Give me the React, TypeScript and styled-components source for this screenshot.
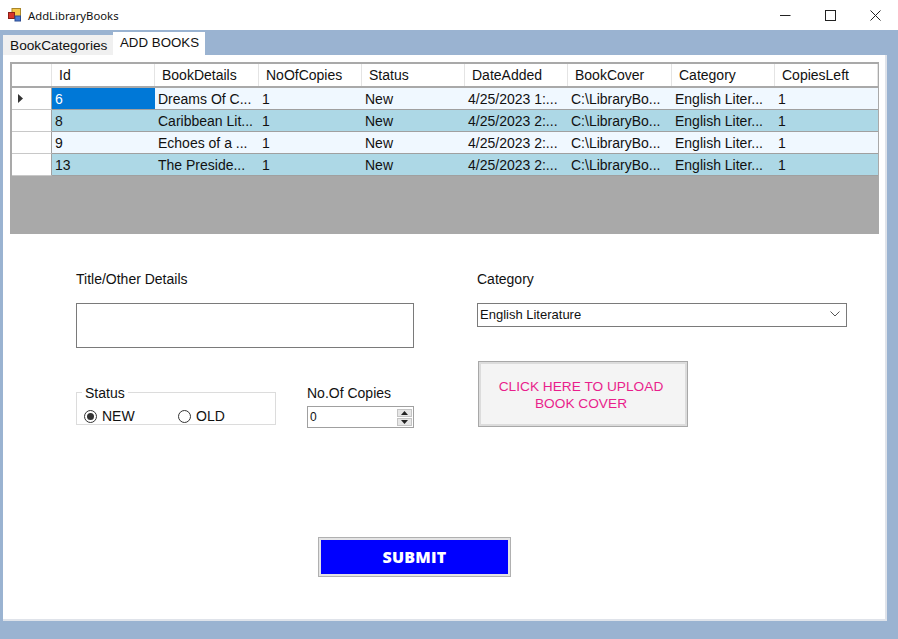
import React from "react";
import styled, { createGlobalStyle } from "styled-components";

const columns = ["Id", "BookDetails", "NoOfCopies", "Status", "DateAdded", "BookCover", "Category", "CopiesLeft"];

const rows = [
  { id: "6", details: "Dreams Of C...", date: "4/25/2023 1:..." },
  { id: "8", details: "Caribbean Lit...", date: "4/25/2023 2:..." },
  { id: "9", details: "Echoes of a ...", date: "4/25/2023 2:..." },
  { id: "13", details: "The Preside...", date: "4/25/2023 2:..." },
];

const GlobalStyle = createGlobalStyle`
  html, body {
    margin: 0;
    padding: 0;
    background: #9ab3d1;
    font-family: "Liberation Sans", Arial, sans-serif;
    font-size: 14px;
    color: #111;
  }
`;

const Window = styled.div`
  width: 898px;
  height: 639px;
  display: flex;
  flex-direction: column;
  overflow: hidden;
  background: #9ab3d1;
`;

const TitleBar = styled.div`
  height: 30px;
  background: #fff;
  display: flex;
  align-items: center;
  padding-left: 8px;
  box-sizing: border-box;
`;

const TitleText = styled.span`
  margin-left: 7px;
  font-family: "Noto Sans", sans-serif;
  font-size: 11.3px;
  flex: 1;
`;

const WinButton = styled.div`
  width: 46px;
  height: 30px;
  display: flex;
  align-items: center;
  justify-content: center;
  margin-left: -1px;
`;

const Tabs = styled.div`
  display: flex;
  align-items: flex-end;
  height: 25px;
  padding-left: 3px;
`;

const Tab = styled.div<{ $active?: boolean }>`
  box-sizing: border-box;
  height: ${(p) => (p.$active ? "23px" : "20px")};
  width: ${(p) => (p.$active ? "92px" : "110px")};
  padding: 3px 0 0 7px;
  background: ${(p) => (p.$active ? "#fff" : "#f0f0f0")};
  font-size: ${(p) => (p.$active ? "13.3px" : "13.7px")};
  line-height: 16px;
  white-space: nowrap;
`;

const Panel = styled.div`
  box-sizing: border-box;
  width: 884px;
  height: 566px;
  margin-left: 3px;
  background: #fff;
  border-right: 2px solid #dfe3ea;
  border-bottom: 2px solid #dfe3ea;
  padding: 7px 6px 0 7px;
`;

const Grid = styled.div`
  box-sizing: border-box;
  width: 869px;
  height: 172px;
  background: #a9a9a9;
  padding: 2px 1px 0 2px;
`;

const RowLine = styled.div`
  display: grid;
  grid-template-columns: 40px 103px 104px 103px 103px 103px 104px 103px 103px;
`;

const HeaderCell = styled.div`
  box-sizing: border-box;
  height: 22px;
  background: #fff;
  border-right: 1px solid #e4e4e4;
  padding: 3px 0 0 7px;
  font-size: 14px;
  line-height: 16px;
  white-space: nowrap;
`;

const RowHead = styled.div`
  box-sizing: border-box;
  height: 22px;
  background: #fff;
  border-right: 1px solid #a0a0a0;
  border-bottom: 1px solid #c8c8c8;
  display: flex;
  align-items: center;
  padding-left: 6px;
`;

const Cell = styled.div<{ $alt?: boolean; $selected?: boolean }>`
  box-sizing: border-box;
  height: 22px;
  padding: 3px 0 0 3px;
  background: ${(p) => (p.$selected ? "#0078d7" : p.$alt ? "#add8e6" : "#f0f8ff")};
  color: ${(p) => (p.$selected ? "#fff" : "#111")};
  border-bottom: 1px solid #a0a0a0;
  font-size: 14px;
  line-height: 16px;
  white-space: nowrap;
  overflow: hidden;
`;

const HeaderDivider = styled.div`
  height: 2px;
  background: #a9a9a9;
`;

const Form = styled.div`
  display: grid;
  grid-template-columns: 338px 370px;
  column-gap: 63px;
  padding: 37px 0 0 66px;
`;

const Column = styled.div`
  display: flex;
  flex-direction: column;
`;

const Label = styled.div`
  font-size: 14px;
  line-height: 16px;
  white-space: nowrap;
`;

const TextArea = styled.div`
  box-sizing: border-box;
  margin-top: 16px;
  height: 45px;
  border: 1px solid #7a7a7a;
  background: #fff;
`;

const LowerRow = styled.div`
  display: flex;
  margin-top: 37px;
  align-items: flex-start;
`;

const StatusGroup = styled.div`
  box-sizing: border-box;
  position: relative;
  margin-top: 7px;
  width: 200px;
  height: 33px;
  border: 1px solid #dcdcdc;
  display: flex;
  align-items: center;
  padding: 15px 0 0 7px;
`;

const Legend = styled.span`
  position: absolute;
  top: -7px;
  left: 5px;
  padding: 0 3px;
  background: #fff;
  font-size: 14px;
  line-height: 15px;
`;

const RadioOption = styled.div<{ $wide?: boolean }>`
  display: flex;
  align-items: center;
  gap: 5px;
  width: ${(p) => (p.$wide ? "94px" : "auto")};
  font-size: 14px;
  line-height: 16px;
`;

const Radio = styled.span<{ $checked?: boolean }>`
  position: relative;
  box-sizing: border-box;
  width: 13px;
  height: 13px;
  border: 1px solid #333;
  border-radius: 50%;
  background: #fff;

  &::after {
    content: "";
    display: ${(p) => (p.$checked ? "block" : "none")};
    position: absolute;
    inset: 2px;
    border-radius: 50%;
    background: #333;
  }
`;

const CopiesBlock = styled.div`
  margin-left: 31px;
`;

const SpinBox = styled.div`
  box-sizing: border-box;
  margin-top: 5px;
  width: 107px;
  height: 22px;
  border: 1px solid #a0a0a0;
  background: #fff;
  display: flex;
  align-items: center;
  justify-content: space-between;
  padding: 0 1px 0 2px;
  font-size: 12px;
`;

const SpinButtons = styled.div`
  display: flex;
  flex-direction: column;
  gap: 1px;
`;

const SpinButton = styled.div`
  width: 15px;
  height: 8px;
  background: #e6e6e6;
  border: 1px solid #c4c4c4;
  box-sizing: border-box;
  display: flex;
  align-items: center;
  justify-content: center;
`;

const Combo = styled.div`
  box-sizing: border-box;
  margin-top: 16px;
  height: 24px;
  border: 1px solid #7a7a7a;
  background: #fff;
  display: flex;
  align-items: center;
  justify-content: space-between;
  padding: 0 6px 2px 2px;
  font-size: 13px;
`;

const UploadButton = styled.div`
  box-sizing: border-box;
  margin: 34px 0 0 1px;
  width: 210px;
  height: 66px;
  background: #f4f4f4;
  border: 1px solid #a8a8a8;
  outline: 2px solid #dcdcdc;
  outline-offset: -3px;
  color: #e91e8c;
  font-size: 13.7px;
  line-height: 17px;
  text-align: center;
  display: flex;
  align-items: center;
  justify-content: center;
  padding: 2px 21px 0 17px;
`;

const SubmitRow = styled.div`
  display: flex;
  padding: 109px 0 0 308px;
`;

const SubmitButton = styled.div`
  box-sizing: border-box;
  width: 193px;
  height: 40px;
  background: #0000ff;
  border: 1px solid #b0b0b0;
  outline: 2px solid #e4e4e4;
  outline-offset: -3px;
  color: #fff;
  font-family: "Open Sans", "Noto Sans", sans-serif;
  font-weight: 800;
  font-size: 16px;
  letter-spacing: 0.2px;
  display: flex;
  align-items: center;
  justify-content: center;
`;

const AppIcon = () => (
  <svg width="13" height="14" viewBox="0 0 13 14">
    <rect x="4" y="0.5" width="8.5" height="8.5" fill="#f4c64a" stroke="#a8862a" />
    <rect x="0.5" y="4.5" width="6" height="6" fill="#d8342a" stroke="#8a2018" />
    <rect x="7" y="8" width="5.5" height="5" fill="#4a78d0" stroke="#2a4a90" />
  </svg>
);

const App = () => {
  return (
    <Window>
      <GlobalStyle />
      <TitleBar>
        <AppIcon />
        <TitleText>AddLibraryBooks</TitleText>
        <WinButton>
          <svg width="11" height="11" viewBox="0 0 11 11">
            <path d="M0 5.5H10.5" stroke="#222" />
          </svg>
        </WinButton>
        <WinButton>
          <svg width="11" height="11" viewBox="0 0 11 11">
            <rect x="0.5" y="0.5" width="10" height="10" fill="none" stroke="#222" />
          </svg>
        </WinButton>
        <WinButton>
          <svg width="11" height="11" viewBox="0 0 11 11">
            <path d="M0.5 0.5L10.5 10.5M10.5 0.5L0.5 10.5" stroke="#222" />
          </svg>
        </WinButton>
      </TitleBar>
      <Tabs>
        <Tab>BookCategories</Tab>
        <Tab $active>ADD BOOKS</Tab>
      </Tabs>
      <Panel>
        <Grid>
          <RowLine>
            <HeaderCell />
            {columns.map((c) => (
              <HeaderCell key={c}>{c}</HeaderCell>
            ))}
          </RowLine>
          <HeaderDivider />
          {rows.map((r, i) => (
            <RowLine key={r.id}>
              <RowHead>
                {i === 0 && (
                  <svg width="5" height="9" viewBox="0 0 5 9">
                    <path d="M0 0L5 4.5L0 9Z" fill="#333" />
                  </svg>
                )}
              </RowHead>
              <Cell $alt={i % 2 === 1} $selected={i === 0}>{r.id}</Cell>
              <Cell $alt={i % 2 === 1}>{r.details}</Cell>
              <Cell $alt={i % 2 === 1}>1</Cell>
              <Cell $alt={i % 2 === 1}>New</Cell>
              <Cell $alt={i % 2 === 1}>{r.date}</Cell>
              <Cell $alt={i % 2 === 1}>C:\LibraryBo...</Cell>
              <Cell $alt={i % 2 === 1}>English Liter...</Cell>
              <Cell $alt={i % 2 === 1}>1</Cell>
            </RowLine>
          ))}
        </Grid>
        <Form>
          <Column>
            <Label>Title/Other Details</Label>
            <TextArea />
            <LowerRow>
              <StatusGroup>
                <Legend>Status</Legend>
                <RadioOption $wide>
                  <Radio $checked />
                  NEW
                </RadioOption>
                <RadioOption>
                  <Radio />
                  OLD
                </RadioOption>
              </StatusGroup>
              <CopiesBlock>
                <Label>No.Of Copies</Label>
                <SpinBox>
                  0
                  <SpinButtons>
                    <SpinButton>
                      <svg width="7" height="4" viewBox="0 0 7 4">
                        <path d="M3.5 0L7 4H0Z" fill="#222" />
                      </svg>
                    </SpinButton>
                    <SpinButton>
                      <svg width="7" height="4" viewBox="0 0 7 4">
                        <path d="M0 0H7L3.5 4Z" fill="#222" />
                      </svg>
                    </SpinButton>
                  </SpinButtons>
                </SpinBox>
              </CopiesBlock>
            </LowerRow>
          </Column>
          <Column>
            <Label>Category</Label>
            <Combo>
              English Literature
              <svg width="10" height="6" viewBox="0 0 10 6">
                <path d="M0.5 0.5L5 5L9.5 0.5" fill="none" stroke="#555" />
              </svg>
            </Combo>
            <UploadButton>CLICK HERE TO UPLOAD BOOK COVER</UploadButton>
          </Column>
        </Form>
        <SubmitRow>
          <SubmitButton>SUBMIT</SubmitButton>
        </SubmitRow>
      </Panel>
    </Window>
  );
};

export default App;
